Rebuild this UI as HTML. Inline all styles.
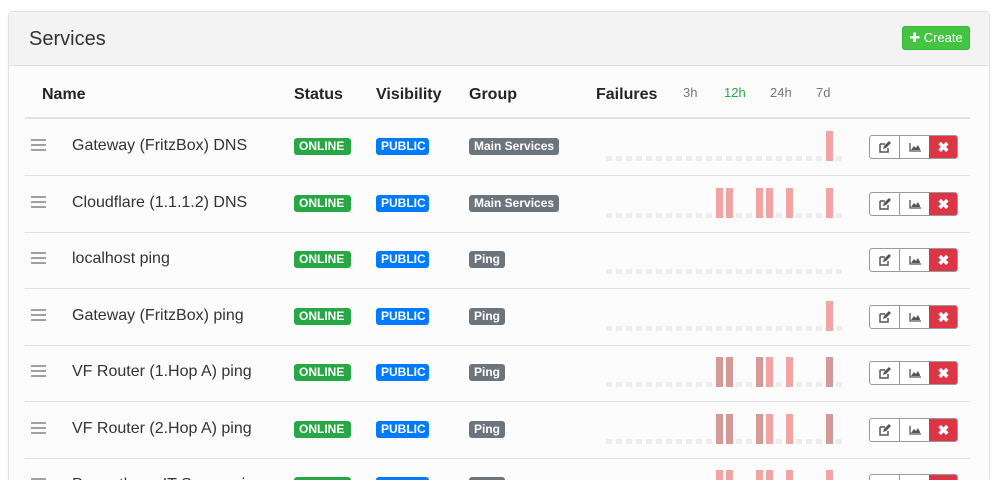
<!DOCTYPE html>
<html><head><meta charset="utf-8"><style>
*{box-sizing:border-box;margin:0;padding:0}
html,body{width:999px;height:480px;overflow:hidden}
body{background:#fff;font-family:"Liberation Sans",sans-serif;color:#212529;position:relative}
.card{position:absolute;left:8px;top:11px;width:982px;height:469px;border:1px solid #e2e2e2;border-bottom:0;border-radius:4px 4px 0 0;background:#fcfcfc;box-shadow:0 1px 3px rgba(0,0,0,.06)}
.head{position:absolute;left:0;top:0;width:100%;height:54px;background:#f3f3f3;border-bottom:1px solid #e0e0e0}
.head h1{position:absolute;left:20px;top:16px;font-size:20px;font-weight:normal;color:#333}
.create{position:absolute;left:893px;top:14px;width:68px;height:24px;background:#43c443;border:1px solid #3bb33b;border-radius:3px;color:#fff;font-size:13px;line-height:22px;text-align:center}
.th{position:absolute;top:86px;font-size:16px;font-weight:bold;color:#212529}
.tab{position:absolute;top:85px;font-size:13px;color:#777}
.hl{position:absolute;left:25px;width:945px;height:1px;background:#dee2e6}
.row{position:absolute;left:0;width:999px;height:56px;overflow:visible}
.drag{position:absolute;left:31px;top:-7px;width:15px;height:14px}
.drag i{position:absolute;left:0;width:15px;height:2px;background:#a0a0a0}
.nm{position:absolute;left:72px;top:-9px;font-size:16px;color:#333;white-space:nowrap}
.b{position:absolute;top:-8px;height:17px;border-radius:3px;color:#fff;font-size:12px;font-weight:bold;line-height:17px;padding:0 5px}
.on{left:294px;background:#28a745;width:57px}
.pub{left:376px;background:#007bff;width:53px}
.grp{left:469px;background:#6c757d}
.btns{position:absolute;left:869px;top:-11px;height:24px;width:89px;border:1px solid #999;border-radius:3px;overflow:hidden;background:#fff}
.btns span{position:absolute;top:0;height:22px;width:30px}
.btns .e{left:0;border-right:1px solid #999}
.btns .c{left:30px}
.btns .x{left:59px;width:29px;background:#dc3545;color:#fff;font-weight:bold;font-size:14px;text-align:center;line-height:22px}
.bar{position:absolute;width:7px}
</style></head><body>
<div class="card">
<div class="head"><h1>Services</h1><div class="create">✚ Create</div></div>
</div>
<div class="th" style="left:42px">Name</div>
<div class="th" style="left:294px">Status</div>
<div class="th" style="left:376px">Visibility</div>
<div class="th" style="left:469px">Group</div>
<div class="th" style="left:596px">Failures</div>
<div class="tab" style="left:683px">3h</div>
<div class="tab" style="left:724px;color:#28a745">12h</div>
<div class="tab" style="left:770px">24h</div>
<div class="tab" style="left:816px">7d</div>
<div class="hl" style="top:117px;height:2px"></div>
<div id="rows"></div>
<script>
var rows=[
["Gateway (FritzBox) DNS","Main Services",{22:'l'}],
["Cloudflare (1.1.1.2) DNS","Main Services",{11:'l',12:'l',15:'l',16:'l',18:'l',22:'l'}],
["localhost ping","Ping",{}],
["Gateway (FritzBox) ping","Ping",{22:'l'}],
["VF Router (1.Hop A) ping","Ping",{11:'d',12:'d',15:'d',16:'l',18:'l',22:'d'}],
["VF Router (2.Hop A) ping","Ping",{11:'d',12:'d',15:'d',16:'l',18:'l',22:'d'}],
["Prometheus IT Server ping","Ping",{11:'l',12:'l',15:'l',16:'l',18:'l',22:'l'}]];
var h='';
rows.forEach(function(r,i){
 var c=Math.round(146+i*56.5);
 h+='<div class="row" style="top:'+c+'px">';
 h+='<div class="drag"><i style="top:0"></i><i style="top:5px"></i><i style="top:10px"></i></div><div class="nm">'+r[0]+'</div>';
 h+='<div class="b on">ONLINE</div><div class="b pub">PUBLIC</div><div class="b grp">'+r[1]+'</div>';
 for(var k=0;k<24;k++){var t=r[2][k];var x=606+k*10;
  if(t)h+='<div class="bar" style="left:'+x+'px;top:-15px;height:30px;background:'+(t=='d'?'#d49a9a':'#f2a3a3')+'"></div>';
  else h+='<div class="bar" style="left:'+x+'px;top:10px;height:5px;width:6px;background:#ececec"></div>';}
 h+='<div class="btns"><span class="e"><svg width="30" height="22" viewBox="0 0 30 22"><path d="M10 8h5M10 8v8h8v-4" stroke="#555" stroke-width="1.5" fill="none"/><path d="M13 13l1-3 5-5 2 2-5 5z" fill="#555"/></svg></span><span class="c"><svg width="30" height="22" viewBox="0 0 30 22"><path d="M10 7v8h11" stroke="#555" stroke-width="1.3" fill="none"/><path d="M11 14l3-4 2 2 2-3 2 4v1z" fill="#555"/></svg></span><span class="x">✖</span></div>';
 h+='</div>';
 if(i<6)h+='<div class="hl" style="top:'+(c+29)+'px"></div>';
});
document.getElementById('rows').innerHTML=h;
</script>
</body></html>
